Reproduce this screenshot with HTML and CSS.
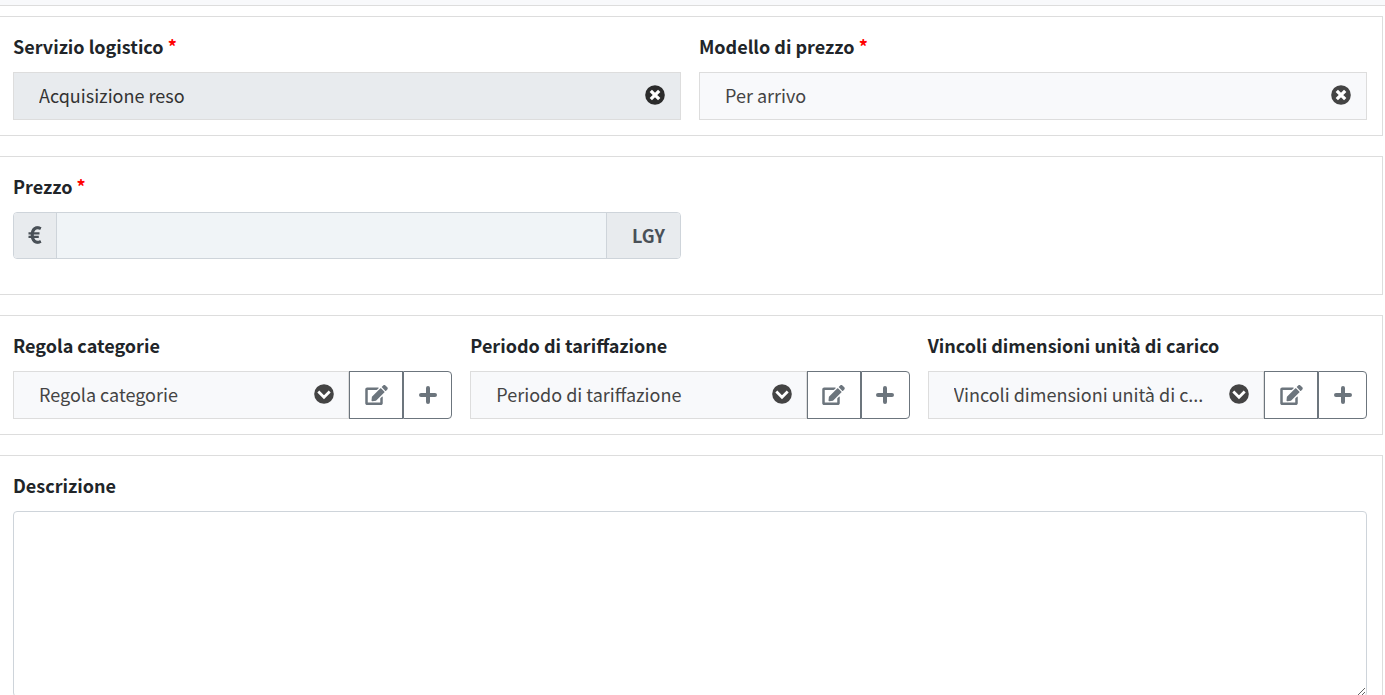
FILE: index.html
```
<!DOCTYPE html>
<html lang="it">
<head>
    <meta charset="UTF-8">
    <meta name="viewport" content="width=device-width, initial-scale=1.0">
    <title>Servizio logistico</title>
    <link rel="stylesheet" href="styles.css">
</head>
<body>

    <svg class="symbols" aria-hidden="true">
        <symbol id="icon-clear" viewBox="0 0 20 20">
            <circle cx="10" cy="10" r="9.8" fill="currentColor"/>
            <path d="M5.800 5.800l8.400 8.400M14.200 5.800l-8.400 8.400" fill="none" stroke="#fff" stroke-width="3.300"/>
        </symbol>
        <symbol id="icon-chevron" viewBox="0 0 20 20">
            <circle cx="10" cy="10" r="9.8" fill="currentColor"/>
            <path d="M4.300 7.500L10 13.200l5.700-5.700" fill="none" stroke="#fff" stroke-width="2.800"/>
        </symbol>
        <symbol id="icon-edit" viewBox="0 0 576 512">
            <path fill="currentColor" d="M402.600 83.200l90.200 90.200c3.800 3.800 3.800 10 0 13.800L274.400 405.600l-92.800 10.300c-12.400 1.400-22.900-9.100-21.500-21.500l10.300-92.800L388.800 83.200c3.800-3.800 10-3.800 13.800 0zm162-22.900l-48.800-48.800c-15.200-15.200-39.900-15.200-55.200 0l-35.400 35.400c-3.800 3.800-3.800 10 0 13.800l90.200 90.200c3.800 3.800 10 3.800 13.800 0l35.400-35.400c15.200-15.300 15.200-40 0-55.200zM384 346.200V448H64V128h229.800c3.200 0 6.200-1.300 8.500-3.500l40-40c7.600-7.600 2.200-20.500-8.500-20.500H48C21.500 64 0 85.500 0 112v352c0 26.500 21.500 48 48 48h352c26.500 0 48-21.500 48-48V306.200c0-10.700-12.900-16-20.500-8.500l-40 40c-2.200 2.300-3.500 5.300-3.500 8.500z"/>
        </symbol>
        <symbol id="icon-plus" viewBox="0 0 18 18">
            <path d="M9 2v14M2 9h14" fill="none" stroke="currentColor" stroke-width="4" stroke-linecap="round"/>
        </symbol>
        <symbol id="icon-euro" viewBox="0 0 14 18">
            <path d="M12.800 2.500C7.500 0 4.200 3.500 4.200 9s3.300 9 8.600 6.500M.5 7.300h11M.5 10.900h10.300" fill="none" stroke="currentColor" stroke-width="2.200"/>
            <path d="M12.800 2.500C7.500 0 4.200 3.500 4.200 9s3.300 9 8.600 6.500" fill="none" stroke="currentColor" stroke-width="3"/>
        </symbol>
    </svg>

    <div class="topbar"></div>

    <form class="service-form">
        <section class="panel two-cols">
            <div class="field">
                <label for="service">Servizio logistico <span class="required">*</span></label>
                <div class="combo">
                    <input class="combo-input locked" id="service" type="text" value="Acquisizione reso" readonly>
                    <button class="combo-icon dark" type="button" aria-label="Cancella servizio"><svg><use href="#icon-clear"/></svg></button>
                </div>
            </div>
            <div class="field">
                <label for="model">Modello di prezzo <span class="required">*</span></label>
                <div class="combo">
                    <input class="combo-input" id="model" type="text" value="Per arrivo">
                    <button class="combo-icon" type="button" aria-label="Cancella modello"><svg><use href="#icon-clear"/></svg></button>
                </div>
            </div>
        </section>

        <section class="panel two-cols price">
            <div class="field">
                <label for="price">Prezzo <span class="required">*</span></label>
                <div class="input-group">
                    <span class="addon"><svg class="euro" role="img" aria-label="Euro"><use href="#icon-euro"/></svg></span>
                    <input class="price-input" id="price" type="text">
                    <span class="addon unit">LGY</span>
                </div>
            </div>
        </section>

        <section class="panel three-cols">
            <div class="field">
                <label for="category">Regola categorie</label>
                <div class="select-group">
                    <div class="combo">
                        <select class="combo-input" id="category"><option>Regola categorie</option></select>
                        <span class="combo-icon arrow"><svg><use href="#icon-chevron"/></svg></span>
                    </div>
                    <button class="btn edit" type="button" aria-label="Modifica"><svg><use href="#icon-edit"/></svg></button>
                    <button class="btn add" type="button" aria-label="Aggiungi"><svg><use href="#icon-plus"/></svg></button>
                </div>
            </div>
            <div class="field">
                <label for="period">Periodo di tariffazione</label>
                <div class="select-group">
                    <div class="combo">
                        <select class="combo-input" id="period"><option>Periodo di tariffazione</option></select>
                        <span class="combo-icon arrow"><svg><use href="#icon-chevron"/></svg></span>
                    </div>
                    <button class="btn edit" type="button" aria-label="Modifica"><svg><use href="#icon-edit"/></svg></button>
                    <button class="btn add" type="button" aria-label="Aggiungi"><svg><use href="#icon-plus"/></svg></button>
                </div>
            </div>
            <div class="field">
                <label for="limits">Vincoli dimensioni unità di carico</label>
                <div class="select-group">
                    <div class="combo">
                        <select class="combo-input" id="limits"><option>Vincoli dimensioni unità di c...</option></select>
                        <span class="combo-icon arrow"><svg><use href="#icon-chevron"/></svg></span>
                    </div>
                    <button class="btn edit" type="button" aria-label="Modifica"><svg><use href="#icon-edit"/></svg></button>
                    <button class="btn add" type="button" aria-label="Aggiungi"><svg><use href="#icon-plus"/></svg></button>
                </div>
            </div>
        </section>

        <section class="panel">
            <div class="field">
                <label for="description">Descrizione</label>
                <textarea class="description" id="description"></textarea>
            </div>
        </section>
    </form>

</body>
</html>
```
FILE: styles.css
```
* {
    box-sizing: border-box;
}

html {
    overflow: hidden;
}

body {
    margin: 0;
    background: #fff;
    color: #212529;
    font-family: "Source Sans Pro", "Noto Sans CJK KR", sans-serif;
    font-size: 18px;
    line-height: 28px;
}

input,
select,
textarea,
button {
    margin: 0;
    font: inherit;
    color: inherit;
}

svg {
    display: block;
}

.symbols {
    position: absolute;
    width: 0;
    height: 0;
}

.topbar {
    height: 6px;
    background: #f8f9fb;
    border-bottom: 1px solid #ddd;
}

/* Panels */
.service-form {
    display: flex;
    flex-direction: column;
    gap: 20px;
    margin: 10px 2px 0 0;
}

.panel {
    padding: 15px 15px 15px 13px;
    border: 1px solid #ddd;
    border-left: none;
}

.two-cols,
.three-cols {
    display: grid;
    grid-template-columns: repeat(2, minmax(0, 1fr));
    gap: 18px;
}

.three-cols {
    grid-template-columns: repeat(3, minmax(0, 1fr));
}

.price {
    padding-bottom: 35px;
}

.field {
    display: flex;
    flex-direction: column;
    gap: 12px;
}

label {
    font-weight: bold;
}

.required {
    color: #f00;
}

/* Combo boxes */
.combo {
    position: relative;
    flex: 1;
    min-width: 0;
}

.combo-input {
    display: block;
    width: 100%;
    height: 48px;
    padding: 0 50px 2px 25px;
    border: 1px solid #ddd;
    border-radius: 0;
    background: #f8f9fb;
    color: #444;
    appearance: none;
    text-overflow: ellipsis;
}

.combo-input.locked {
    background: #e8ebee;
    color: #333;
}

.combo-icon {
    position: absolute;
    top: 13px;
    right: 16px;
    padding: 0;
    border: none;
    background: none;
    color: #444;
    cursor: pointer;
}

.combo-icon.dark {
    color: #2b2b2b;
}

.combo-icon.arrow {
    right: 15px;
    pointer-events: none;
}

.combo-icon svg {
    width: 20px;
    height: 20px;
}

/* Price */
.input-group,
.select-group {
    display: flex;
}

.input-group {
    height: 47px;
    border: 1px solid #ced4da;
    border-radius: 4px;
    overflow: hidden;
}

.addon {
    display: flex;
    align-items: center;
    padding: 0 14px 1px;
    background: #e8ebee;
    color: #495057;
    font-weight: bold;
}

.addon.unit {
    padding: 0 15px 1px 25px;
}

.euro {
    width: 14px;
    height: 18px;
}

.price-input {
    flex: 1;
    min-width: 0;
    padding: 0 15px;
    border: solid #ced4da;
    border-width: 0 1px;
    background: #f0f4f7;
}

/* Buttons */
.btn {
    display: flex;
    align-items: center;
    justify-content: center;
    width: 49px;
    height: 48px;
    padding: 0;
    border: 1px solid #6c757d;
    background: #fff;
    color: #6c757d;
    cursor: pointer;
}

.btn.edit {
    width: 54px;
}

.btn.add {
    border-radius: 0 4px 4px 0;
}

.edit svg {
    width: 23px;
    height: 20px;
}

.add svg {
    width: 18px;
    height: 18px;
}

.description {
    display: block;
    width: 100%;
    height: 186px;
    padding: 8px 15px;
    border: 1px solid #ced4da;
    border-radius: 4px;
    background: #fff;
    resize: vertical;
}
```
